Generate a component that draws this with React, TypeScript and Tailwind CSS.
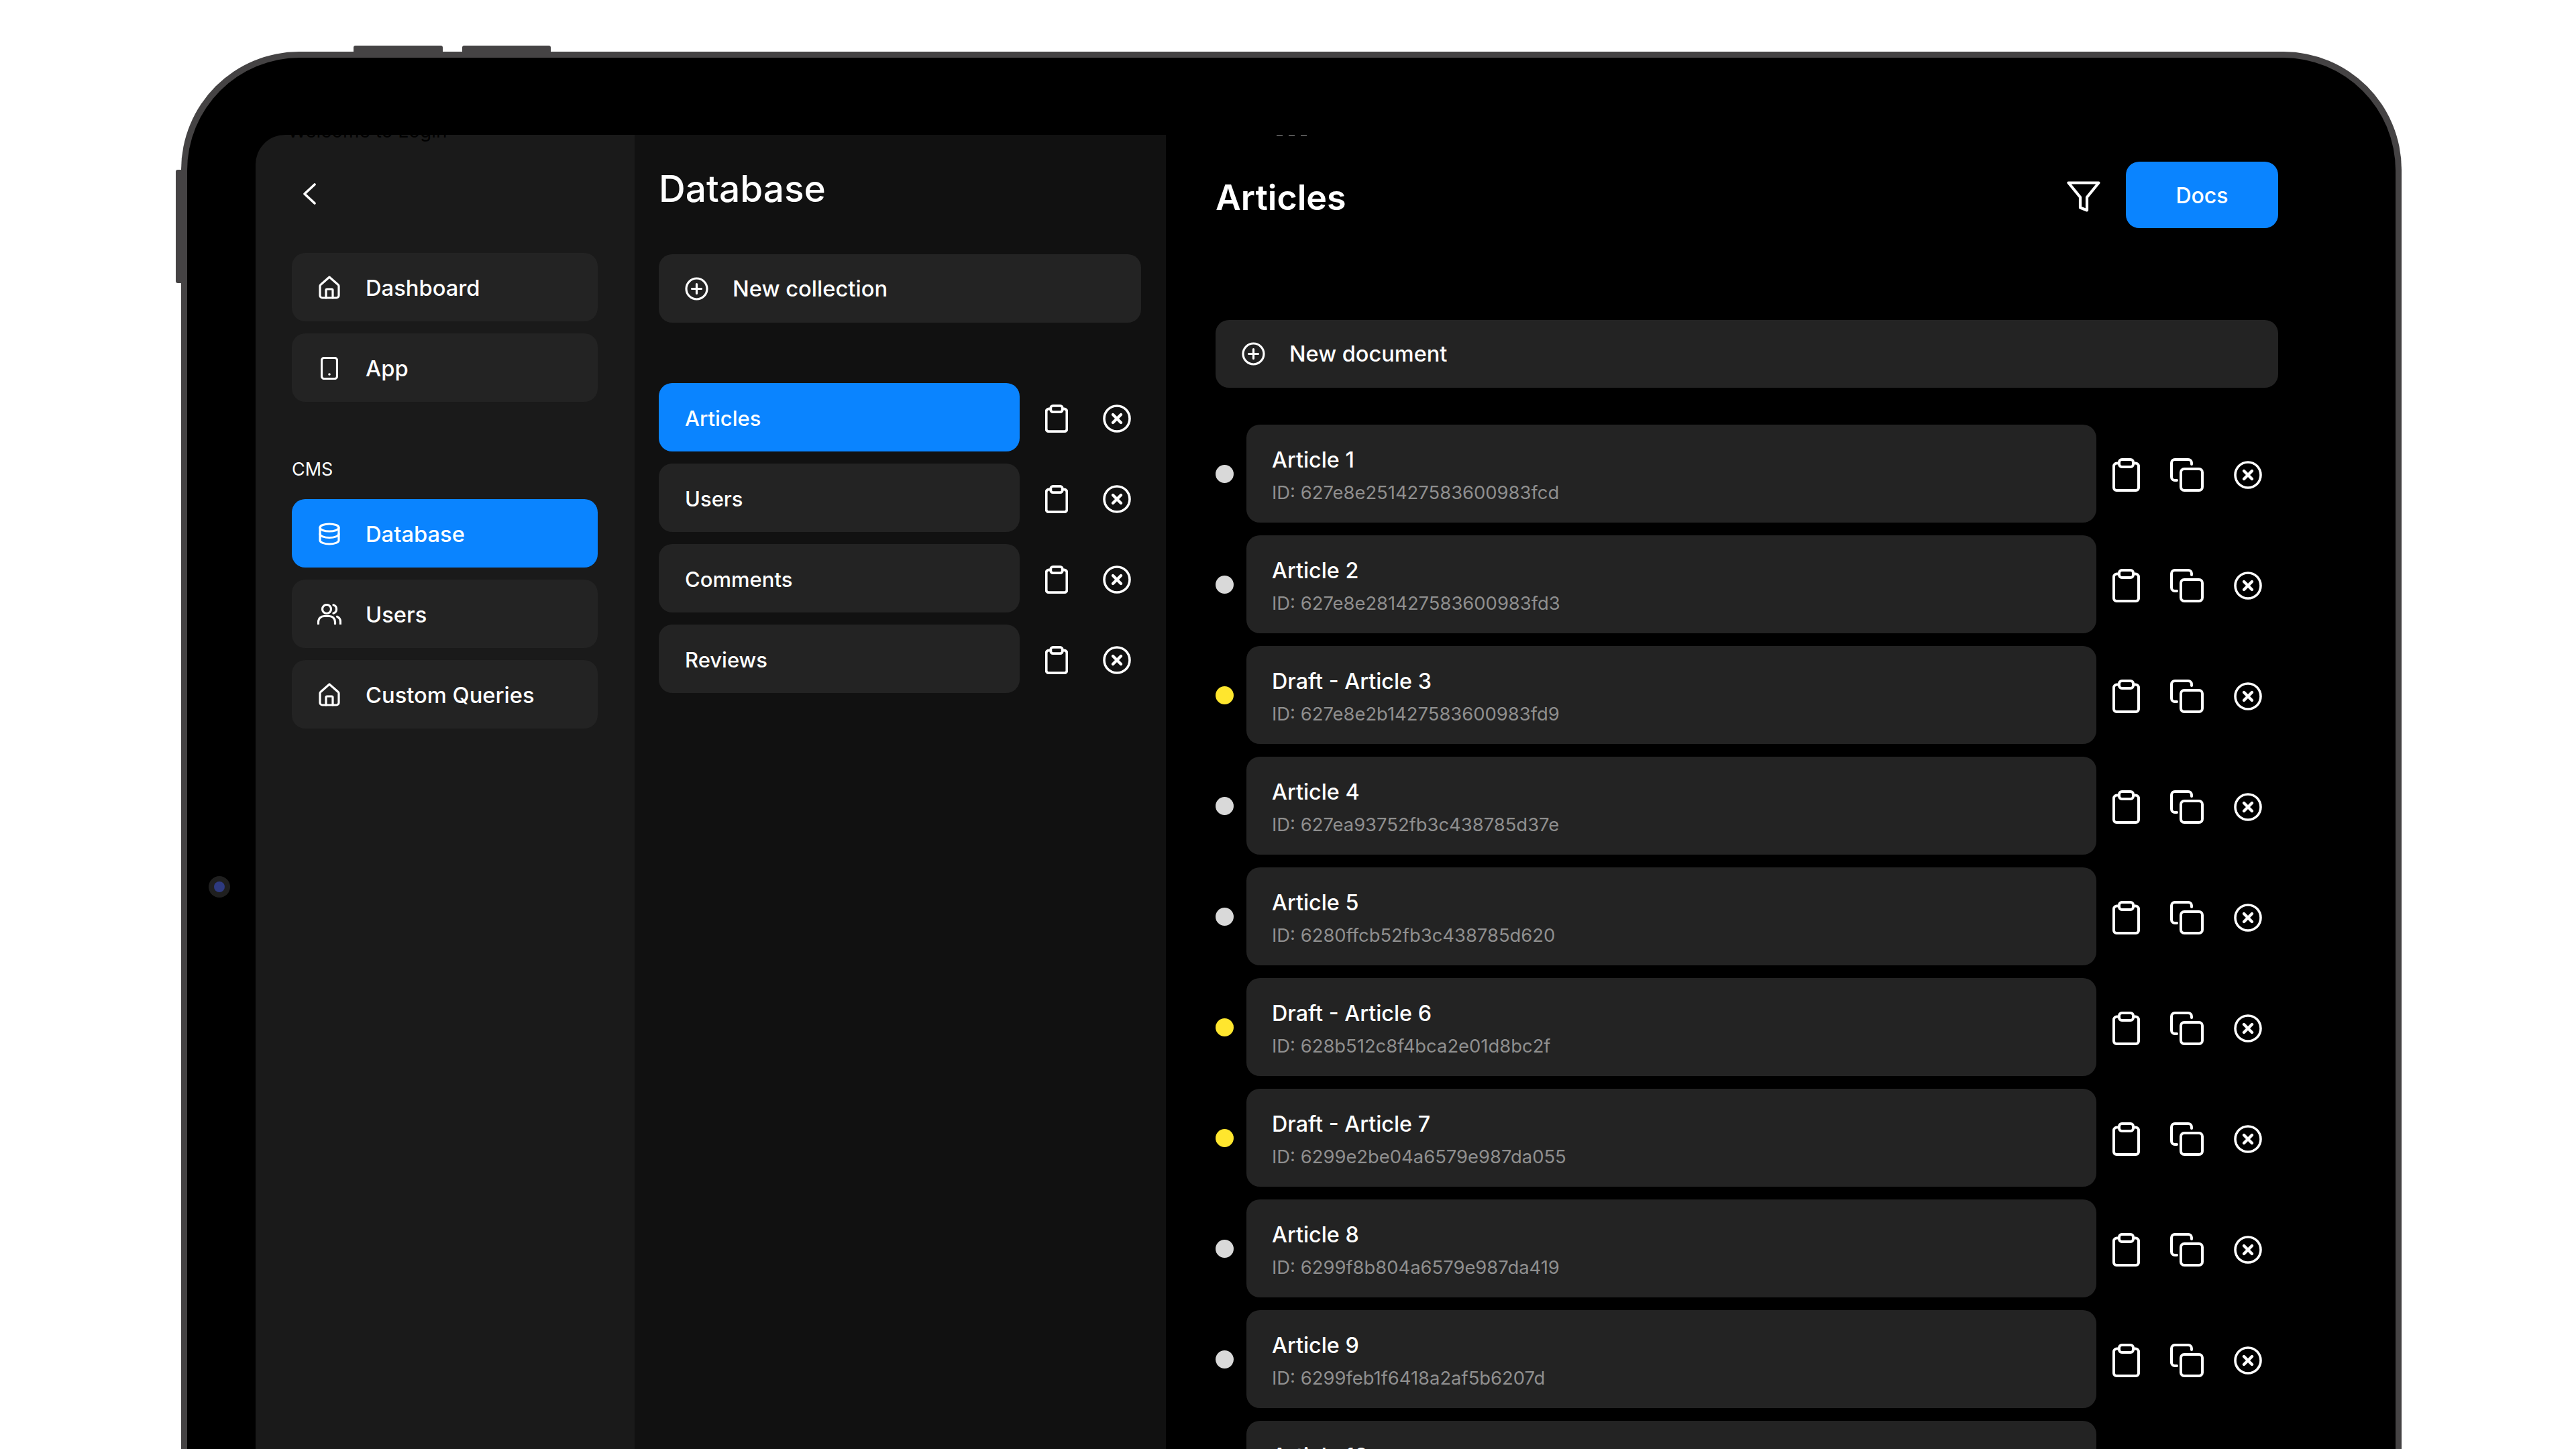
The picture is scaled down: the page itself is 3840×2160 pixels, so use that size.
import React from "react";

const S = { fill: "none", stroke: "currentColor", strokeLinecap: "round", strokeLinejoin: "round" } as const;

function HomeIcon() {
  return (
    <svg width="32" height="35" viewBox="0 0 32 35" {...S} strokeWidth="3.200" className="block">
      <path d="M2 15.500c0-.8.3-1.500.9-2L16 2l13.100 11.500c.6.500.9 1.200.9 2V29.500a3.500 3.500 0 0 1-3.500 3.500H5.500A3.500 3.500 0 0 1 2 29.500Z" />
      <path d="M11 33V21.500a1.500 1.500 0 0 1 1.500-1.500h7a1.500 1.500 0 0 1 1.500 1.500V33" />
    </svg>
  );
}
function PhoneIcon() {
  return (
    <svg width="26" height="34" viewBox="0 0 26 34" {...S} strokeWidth="3.200" className="block">
      <rect x="1.500" y="1.500" width="23" height="31" rx="3.500" />
      <circle cx="13" cy="26" r="1.800" fill="currentColor" stroke="none" />
    </svg>
  );
}
function DbIcon() {
  return (
    <svg width="32" height="34" viewBox="0 0 32 34" {...S} strokeWidth="3.200" className="block">
      <ellipse cx="16" cy="7.500" rx="14" ry="5.500" />
      <path d="M2 7.500v19c0 3 6.300 5.500 14 5.500s14-2.500 14-5.500v-19" />
      <path d="M2 17c0 3 6.300 5.500 14 5.500S30 20 30 17" />
    </svg>
  );
}
function UsersIcon() {
  return (
    <svg width="36" height="31" viewBox="0 0 36 31" {...S} strokeWidth="3.200" className="block">
      <circle cx="14" cy="8" r="6.500" />
      <path d="M1.500 30v-3a8.500 8.500 0 0 1 8.500-8.500h8a8.500 8.500 0 0 1 8.500 8.500v3" />
      <path d="M24 1.800a6.500 6.500 0 0 1 0 12.400" />
      <path d="M29.500 19.200a8.500 8.500 0 0 1 5 7.800v3" />
    </svg>
  );
}
function PlusIcon() {
  return (
    <svg width="35" height="35" viewBox="0 0 35 35" {...S} strokeWidth="3.200" className="block">
      <circle cx="17.500" cy="17.500" r="15.500" />
      <path d="M17.500 10.500v14M10.500 17.500h14" />
    </svg>
  );
}
function ClipIcon({ narrow }: { narrow?: boolean }) {
  return (
    <svg width={narrow ? 34 : 41} height={narrow ? 42 : 50} viewBox="0 0 41 50" {...S} strokeWidth={narrow ? 4.600 : 4} className="block">
      <path d="M10 7.500H6.500A4.500 4.500 0 0 0 2 12v32a4 4 0 0 0 4 4h29a4 4 0 0 0 4-4V12a4.500 4.500 0 0 0-4.500-4.500H31" />
      <rect x="10" y="2" width="21" height="11" rx="4" />
    </svg>
  );
}
function CopyIcon() {
  return (
    <svg width="50" height="50" viewBox="0 0 50 50" {...S} strokeWidth="4" className="block">
      <rect x="16" y="16" width="32" height="32" rx="5" />
      <path d="M32 9V7a5 5 0 0 0-5-5H7a5 5 0 0 0-5 5v21a5 5 0 0 0 5 5h3" />
    </svg>
  );
}
function CloseIcon() {
  return (
    <svg width="42" height="42" viewBox="0 0 42 42" {...S} strokeWidth="3.600" className="block">
      <circle cx="21" cy="21" r="19" />
      <path d="M15 15l12 12M27 15L15 27" strokeWidth="4.400" />
    </svg>
  );
}
function FilterIcon() {
  return (
    <svg width="50" height="46" viewBox="0 0 50 46" {...S} strokeWidth="4.200" className="block">
      <path d="M2.500 2.500h45L30 24v19.500l-10-4V24Z" />
    </svg>
  );
}
function BackIcon() {
  return (
    <svg width="19" height="32" viewBox="0 0 19 32" {...S} strokeWidth="3.600" className="block">
      <path d="M17 2L2 16l15 14" />
    </svg>
  );
}

function NavItem({ icon, label, active }: { icon: React.ReactNode; label: string; active?: boolean }) {
  return (
    <div className={`flex h-[102px] w-[456px] items-center rounded-[20px] ${active ? "bg-[#0a84ff]" : "bg-[#232323]"}`}>
      <div className="flex w-[110px] shrink-0 justify-center pl-[2px] pt-[1px]">{icon}</div>
      <span className="pt-[3px] text-[32.7px] font-medium text-white">{label}</span>
    </div>
  );
}

function CollectionRow({ label, active }: { label: string; active?: boolean }) {
  return (
    <div className="flex items-center">
      <div className={`flex h-[102px] w-[538px] items-center rounded-[20px] pl-[39px] ${active ? "bg-[#0a84ff]" : "bg-[#232323]"}`}>
        <span className="pt-[4px] text-[31px] font-medium text-white">{label}</span>
      </div>
      <div className="ml-[38px] mt-[4px] text-white"><ClipIcon narrow /></div>
      <div className="ml-[52px] mt-[4px] text-white"><CloseIcon /></div>
    </div>
  );
}

function DocRow({ title, id, draft }: { title: string; id: string; draft?: boolean }) {
  return (
    <div className="flex items-center">
      <div className={`h-[27px] w-[27px] shrink-0 rounded-full ${draft ? "bg-[#ffe62e]" : "bg-[#d9d9d9]"}`} />
      <div className="ml-[19px] flex h-[146px] w-[1267px] shrink-0 flex-col justify-start rounded-[20px] bg-[#232323] pl-[38px] pt-[33px]">
        <div className="text-[32.3px] leading-[40px] font-medium text-white">{title}</div>
        <div className="mt-[11px] text-[27.4px] leading-[34px] text-[#8f8f8f]">{id}</div>
      </div>
      <div className="ml-[24px] mt-[4px] flex items-center text-white">
        <ClipIcon />
        <div className="ml-[45px]"><CopyIcon /></div>
        <div className="ml-[45px]"><CloseIcon /></div>
      </div>
    </div>
  );
}

const docs = [
  ["Article 1", "ID: 627e8e251427583600983fcd", false],
  ["Article 2", "ID: 627e8e281427583600983fd3", false],
  ["Draft - Article 3", "ID: 627e8e2b1427583600983fd9", true],
  ["Article 4", "ID: 627ea93752fb3c438785d37e", false],
  ["Article 5", "ID: 6280ffcb52fb3c438785d620", false],
  ["Draft - Article 6", "ID: 628b512c8f4bca2e01d8bc2f", true],
  ["Draft - Article 7", "ID: 6299e2be04a6579e987da055", true],
  ["Article 8", "ID: 6299f8b804a6579e987da419", false],
  ["Article 9", "ID: 6299feb1f6418a2af5b6207d", false],
  ["Article 10", "ID: 6299feb9f6418a2af5b62083", false],
] as const;

export default function App() {
  return (
    <div className="h-[2160px] w-[3840px] overflow-hidden bg-white pl-[270px] pt-[77px]" style={{ fontFamily: "Inter, sans-serif" }}>
      <div className="relative h-[2400px] w-[3310px] rounded-[176px] bg-[#454344] p-[9px]">
        <div className="absolute left-[257px] top-[-9px] h-[10px] w-[133px] rounded-t-[3px] bg-[#454344]" />
        <div className="absolute left-[419px] top-[-9px] h-[10px] w-[132px] rounded-t-[3px] bg-[#454344]" />
        <div className="absolute left-[-8px] top-[176px] h-[169px] w-[9px] rounded-l-[3px] bg-[#454344]" />
        <div className="relative flex h-full w-full rounded-[168px] bg-black pl-[102px] pt-[115px]">
          <div className="absolute left-[32px] top-[1220px] flex h-[32px] w-[32px] items-center justify-center rounded-full bg-[#1f1f1f]">
            <div className="h-[16px] w-[16px] rounded-full bg-[#2e3a80]" />
          </div>
          <div className="absolute left-[1624px] top-[115px] flex gap-[9px]">
            <div className="h-[2px] w-[9px] bg-[#555]" />
            <div className="h-[2px] w-[9px] bg-[#555]" />
            <div className="h-[2px] w-[9px] bg-[#555]" />
          </div>
          <aside className="relative h-full w-[565px] shrink-0 overflow-hidden rounded-tl-[44px] bg-[#1a1a1a] pl-[54px] pt-[72px] text-white">
            <div className="absolute left-[48px] top-[-23px] whitespace-nowrap text-[28px] leading-[34px] text-black">Welcome to Login</div>
            <div className="ml-[17px]"><BackIcon /></div>
            <div className="mt-[72px] flex flex-col gap-[18px]">
              <NavItem icon={<HomeIcon />} label="Dashboard" />
              <NavItem icon={<PhoneIcon />} label="App" />
            </div>
            <div className="mt-[84px] text-[27px] leading-[34px]">CMS</div>
            <div className="mt-[27px] flex flex-col gap-[18px]">
              <NavItem icon={<DbIcon />} label="Database" active />
              <NavItem icon={<UsersIcon />} label="Users" />
              <NavItem icon={<HomeIcon />} label="Custom Queries" />
            </div>
          </aside>
          <section className="h-full w-[792px] shrink-0 bg-[#111111] pl-[36px] pt-[46px]">
            <h1 className="text-[55px] leading-[68px] font-medium text-white">Database</h1>
            <div className="mt-[64px] flex h-[102px] w-[719px] items-center rounded-[20px] bg-[#232323] pl-[39px]">
              <div className="text-white"><PlusIcon /></div>
              <span className="ml-[36px] pt-[2px] text-[32.7px] font-medium text-white">New collection</span>
            </div>
            <div className="mt-[90px] flex flex-col gap-[18px]">
              <CollectionRow label="Articles" active />
              <CollectionRow label="Users" />
              <CollectionRow label="Comments" />
              <CollectionRow label="Reviews" />
            </div>
          </section>
          <main className="h-full min-w-0 flex-1 pl-[74px] pt-[40px]">
            <div className="flex h-[99px] w-[1584px] items-center justify-between">
              <h1 className="pt-[8px] text-[52px] font-semibold text-white">Articles</h1>
              <div className="flex items-center">
                <div className="mt-[5px] text-white"><FilterIcon /></div>
                <div className="ml-[38px] flex h-[99px] w-[227px] items-center justify-center rounded-[20px] bg-[#0a84ff] pt-[2px] text-[32px] font-medium text-white">Docs</div>
              </div>
            </div>
            <div className="mt-[137px] flex h-[101px] w-[1584px] items-center rounded-[20px] bg-[#232323] pl-[39px]">
              <div className="text-white"><PlusIcon /></div>
              <span className="ml-[36px] pt-[1px] text-[32.5px] font-medium text-white">New document</span>
            </div>
            <div className="mt-[55px] flex flex-col gap-[19px]">
              {docs.map(([t, i, d]) => (
                <DocRow key={i} title={t} id={i} draft={d} />
              ))}
            </div>
          </main>
        </div>
      </div>
    </div>
  );
}
